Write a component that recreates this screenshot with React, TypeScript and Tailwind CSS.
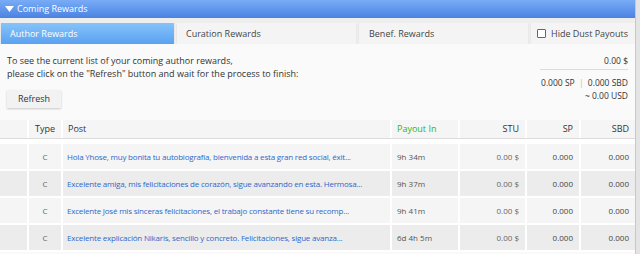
import React from "react";

const rows = [
  { post: "Hola Yhose, muy bonita tu autobiografía, bienvenida a esta gran red social, éxit...", payout: "9h 34m", dark: false },
  { post: "Excelente amiga, mis felicitaciones de corazón, sigue avanzando en esta. Hermosa...", payout: "9h 37m", dark: true },
  { post: "Excelente José mis sinceras felicitaciones, el trabajo constante tiene su recomp...", payout: "9h 41m", dark: false },
  { post: "Excelente explicación Nikaris, sencillo y concreto. Felicitaciones, sigue avanza...", payout: "6d 4h 5m", dark: true },
];

export default function App() {
  return (
    <div className="flex w-[640px] h-[254px] overflow-hidden bg-[#fafafa] text-[#444]" style={{ fontFamily: '"Open Sans", "Noto Sans", sans-serif' }}>
      <div className="w-[635px] flex flex-col">
        <div className="h-[18px] flex items-center bg-gradient-to-b from-[#79acf6] to-[#4a82e2] text-white text-[9px] pl-[5px]">
          <svg width="9" height="6" viewBox="0 0 9 6" className="mr-[3px]"><path d="M0 0h9L4.5 6z" fill="#fff" /></svg>
          <span>Coming Rewards</span>
        </div>
        <div className="h-[5px] bg-[#eeeeee]" />
        <div className="flex gap-[3px] pl-[1px] h-[21px] text-[9px] bg-[#eeeeee]">
          <div className="w-[173px] flex items-center pl-[9px] text-white bg-gradient-to-b from-[#86c3fb] to-[#5aa1f0] shadow-[0_1px_1px_rgba(0,0,0,0.15)]">Author Rewards</div>
          <div className="w-[179px] flex items-center pl-[9px] text-[#444] bg-[#f4f4f4] shadow-[0_1px_1px_rgba(0,0,0,0.12)]">Curation Rewards</div>
          <div className="w-[169px] flex items-center pl-[10px] text-[#444] bg-[#f4f4f4] shadow-[0_1px_1px_rgba(0,0,0,0.12)]">Benef. Rewards</div>
          <div className="flex-1 flex items-center pl-[6px] text-[#444] bg-[#f4f4f4] shadow-[0_1px_1px_rgba(0,0,0,0.12)]">
            <span className="w-[9px] h-[9px] border border-[#666] rounded-[1px] bg-white mr-[5px]" />
            Hide Dust Payouts
          </div>
        </div>
        <div className="flex justify-between pt-[10px] px-[7px] text-[9px] text-[#333] h-[76px] bg-[#fafafa]">
          <div>
            <div className="leading-[13px]">To see the current list of your coming author rewards,</div>
            <div className="leading-[13px]">please click on the "Refresh" button and wait for the process to finish:</div>
            <button className="mt-[10px] w-[54px] h-[18px] bg-[#f2f2f2] shadow-[0_1px_2px_rgba(0,0,0,0.2)] text-[9px] text-[#333]">Refresh</button>
          </div>
          <div className="flex flex-col items-end text-[8.5px] text-[#333]">
            <div className="leading-[13px] w-[88px] text-right pb-[2px] border-b border-[#ddd]">0.00 $</div>
            <div className="leading-[13px] mt-[6px]">0.000 SP <span className="text-[#bbb] mx-[2px]">|</span> 0.000 SBD</div>
            <div className="leading-[13px]">~ 0.00 USD</div>
          </div>
        </div>
        <div className="bg-white flex flex-col gap-[2px] text-[8px]">
          <div className="grid grid-cols-[27px_32px_327px_66px_65px_52px_54px] gap-x-[2px] h-[19px] border-b border-[#ddd] text-[9px] text-[#333]">
            <div className="bg-[#f5f5f5]" />
            <div className="bg-[#f5f5f5] flex items-center justify-center">Type</div>
            <div className="bg-[#f5f5f5] flex items-center pl-[5px]">Post</div>
            <div className="bg-[#f5f5f5] flex items-center pl-[5px] text-[#2bb52b]">Payout In</div>
            <div className="bg-[#f5f5f5] flex items-center justify-end pr-[6px]">STU</div>
            <div className="bg-[#f5f5f5] flex items-center justify-end pr-[6px]">SP</div>
            <div className="bg-[#f5f5f5] flex items-center justify-end pr-[6px]">SBD</div>
          </div>
          <div className="h-[1px]" />
          {rows.map((r, i) => {
            const bg = r.dark ? "bg-[#ececec]" : "bg-[#f5f5f5]";
            return (
              <div key={i} className="grid grid-cols-[27px_32px_327px_66px_65px_52px_54px] gap-x-[2px] h-[25px]">
                <div className={bg} />
                <div className={`${bg} flex items-center justify-center text-[#666]`}>C</div>
                <div className={`${bg} flex items-center pl-[4px] text-[#2e68cc] tracking-[-0.2px] whitespace-nowrap overflow-hidden`}>{r.post}</div>
                <div className={`${bg} flex items-center pl-[5px] text-[#555]`}>{r.payout}</div>
                <div className={`${bg} flex items-center justify-end pr-[6px] text-[#666]`}>0.00 $</div>
                <div className={`${bg} flex items-center justify-end pr-[6px] text-[#444]`}>0.000</div>
                <div className={`${bg} flex items-center justify-end pr-[6px] text-[#444]`}>0.000</div>
              </div>
            );
          })}
          <div className="flex-1 bg-[#fafafa]" />
        </div>
      </div>
      <div className="flex-1 border-l border-[#c8c8c8] bg-[#e4e4e4]" />
    </div>
  );
}
